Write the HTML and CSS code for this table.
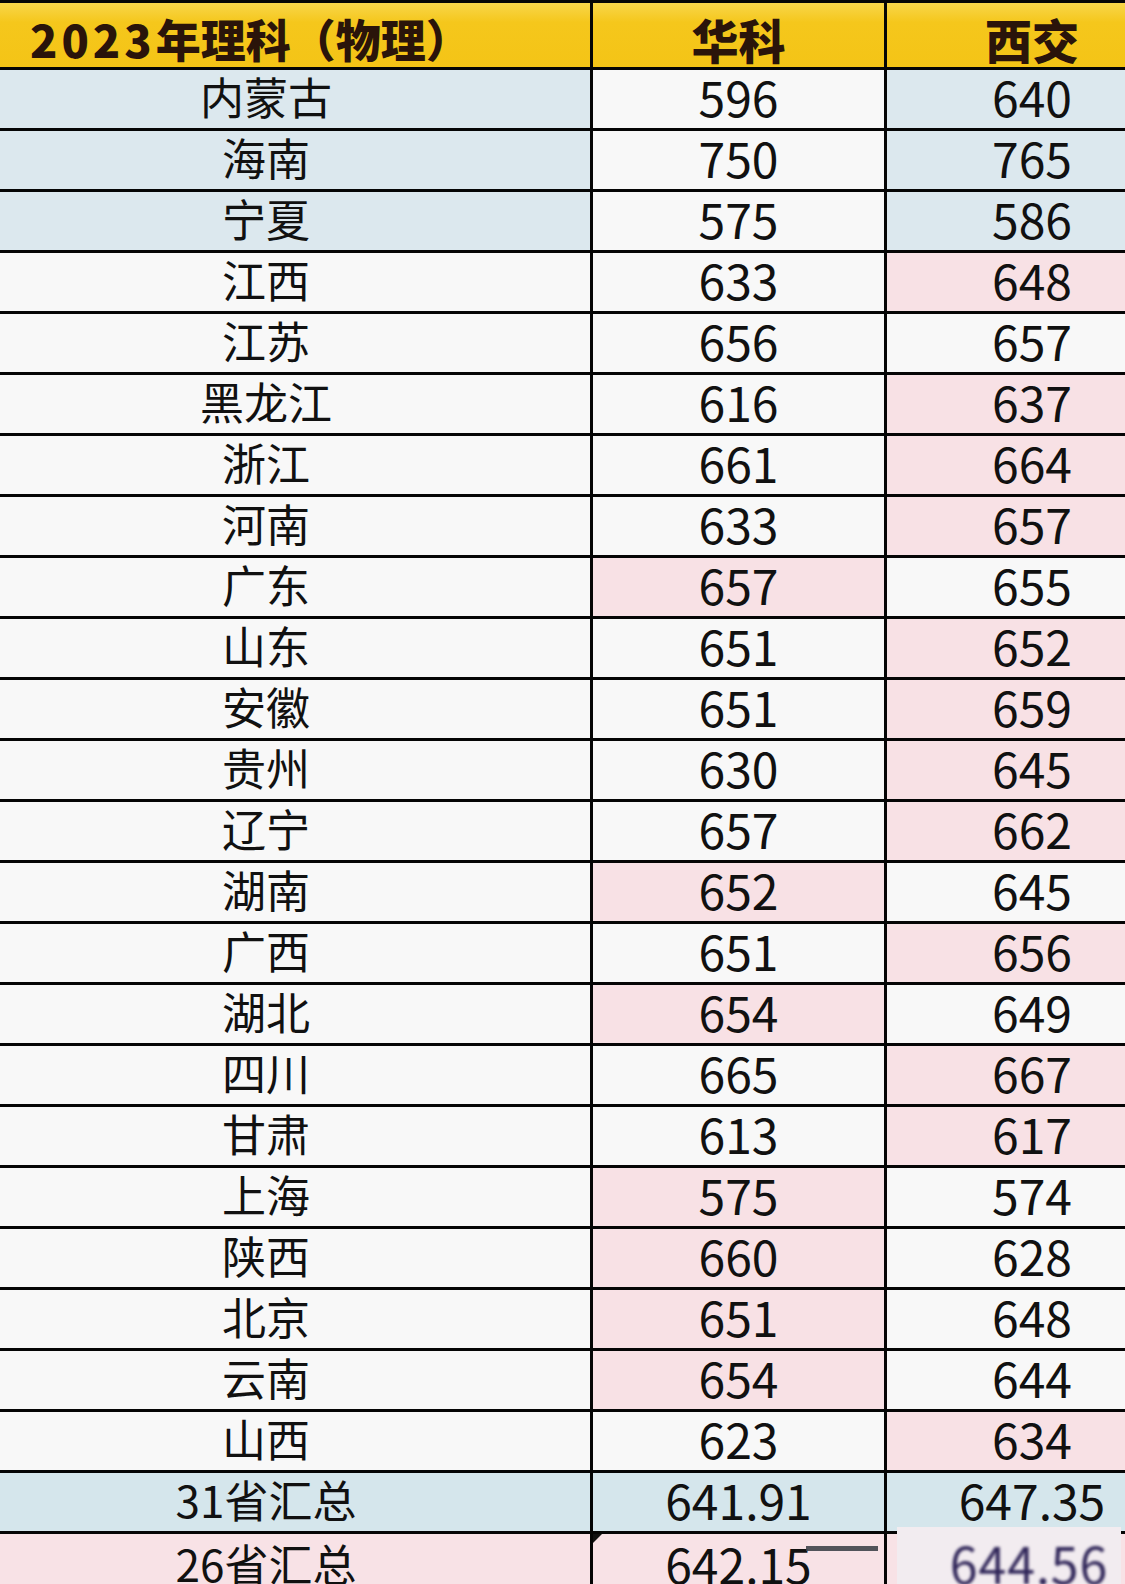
FILE: index.html
```html
<!DOCTYPE html>
<html lang="zh-CN">
<head>
<meta charset="utf-8">
<title>2023年理科（物理）</title>
<link rel="stylesheet" href="styles.css">
</head>
<body>
<div class="sheet">
  <div class="grid">
    <div class="cell hd c1"><span class="yr">2023</span>年理科（物理）</div>
    <div class="cell hd c2">华科</div>
    <div class="cell hd c3">西交</div>

    <div class="cell c1 blue">内蒙古</div><div class="cell c2">596</div><div class="cell c3 blue">640</div>
    <div class="cell c1 blue">海南</div><div class="cell c2">750</div><div class="cell c3 blue">765</div>
    <div class="cell c1 blue">宁夏</div><div class="cell c2">575</div><div class="cell c3 blue">586</div>
    <div class="cell c1">江西</div><div class="cell c2">633</div><div class="cell c3 pink">648</div>
    <div class="cell c1">江苏</div><div class="cell c2">656</div><div class="cell c3">657</div>
    <div class="cell c1">黑龙江</div><div class="cell c2">616</div><div class="cell c3 pink">637</div>
    <div class="cell c1">浙江</div><div class="cell c2">661</div><div class="cell c3 pink">664</div>
    <div class="cell c1">河南</div><div class="cell c2">633</div><div class="cell c3 pink">657</div>
    <div class="cell c1">广东</div><div class="cell c2 pink">657</div><div class="cell c3">655</div>
    <div class="cell c1">山东</div><div class="cell c2">651</div><div class="cell c3 pink">652</div>
    <div class="cell c1">安徽</div><div class="cell c2">651</div><div class="cell c3 pink">659</div>
    <div class="cell c1">贵州</div><div class="cell c2">630</div><div class="cell c3 pink">645</div>
    <div class="cell c1">辽宁</div><div class="cell c2">657</div><div class="cell c3 pink">662</div>
    <div class="cell c1">湖南</div><div class="cell c2 pink">652</div><div class="cell c3">645</div>
    <div class="cell c1">广西</div><div class="cell c2">651</div><div class="cell c3 pink">656</div>
    <div class="cell c1">湖北</div><div class="cell c2 pink">654</div><div class="cell c3">649</div>
    <div class="cell c1">四川</div><div class="cell c2">665</div><div class="cell c3 pink">667</div>
    <div class="cell c1">甘肃</div><div class="cell c2">613</div><div class="cell c3 pink">617</div>
    <div class="cell c1">上海</div><div class="cell c2 pink">575</div><div class="cell c3">574</div>
    <div class="cell c1">陕西</div><div class="cell c2 pink">660</div><div class="cell c3">628</div>
    <div class="cell c1">北京</div><div class="cell c2 pink">651</div><div class="cell c3">648</div>
    <div class="cell c1">云南</div><div class="cell c2 pink">654</div><div class="cell c3">644</div>
    <div class="cell c1">山西</div><div class="cell c2">623</div><div class="cell c3 pink">634</div>
    <div class="cell c1 blue2">31省汇总</div><div class="cell c2 blue2">641.91</div><div class="cell c3 blue2">647.35</div>
    <div class="cell c1 pink2 last">26省汇总</div><div class="cell c2 pink2 flag last">642.15</div><div class="cell c3 pink2 last">644.56</div>
  </div>
  <div class="mark-dash"></div>
  <div class="mark-box"><span class="mark-text">644.56</span></div>
</div>
</body>
</html>
```

FILE: styles.css
```css
html, body {
  margin: 0;
  padding: 0;
  background: #000;
}

body {
  width: 1125px;
  height: 1584px;
  overflow: hidden;
  font-family: "Noto Sans CJK SC", "Noto Sans", sans-serif;
  color: #111;
}

.sheet {
  position: relative;
  width: 1125px;
  height: 1584px;
  overflow: hidden;
}

.grid {
  display: grid;
  grid-template-columns: 590px 291px 238px;
  grid-template-rows: 64px;
  grid-auto-rows: 58px;
  column-gap: 3px;
  row-gap: 3px;
  padding-top: 3px;
  background: #050505;
}

.cell {
  display: flex;
  align-items: center;
  justify-content: center;
  background: #f8f8f8;
  font-size: 48px;
  line-height: 50px;
  padding-bottom: 6px;
  box-sizing: border-box;
  white-space: nowrap;
}

.c1 {
  font-size: 44px;
  padding-right: 58px;
}

.c3 {
  padding-left: 52px;
}

.hd {
  background: linear-gradient(#f8d64a 0%, #f5c71c 30%, #f4c416 100%);
  font-weight: 900;
  color: #2a140a;
  padding-top: 8px;
  padding-bottom: 0;
  font-size: 47px;
  line-height: 52px;
}

.hd.c1 {
  justify-content: flex-start;
  padding-left: 30px;
  padding-right: 0;
  font-size: 45px;
}

.yr {
  letter-spacing: 4px;
}

.last {
  align-items: flex-start;
  padding-top: 4px;
  padding-bottom: 0;
}

.blue {
  background: #dce8ee;
}

.blue2 {
  background: #d5e6ec;
}

.pink {
  background: #f8e1e5;
}

.pink2 {
  background: #f8e2e6;
}

.flag {
  position: relative;
}

.flag::before {
  content: "";
  position: absolute;
  left: 0;
  top: 0;
  border-top: 9px solid #111;
  border-right: 9px solid transparent;
}

.mark-dash {
  position: absolute;
  left: 806px;
  top: 1546px;
  width: 72px;
  height: 5px;
  background: #3f444a;
  opacity: 0.9;
}

.mark-box {
  position: absolute;
  left: 897px;
  top: 1527px;
  width: 224px;
  height: 60px;
  background: #f2ecf0;
  display: flex;
  justify-content: center;
  padding-left: 40px;
  box-sizing: border-box;
}

.mark-text {
  font-size: 50px;
  line-height: 50px;
  padding-top: 10px;
  color: #2f2558;
  filter: blur(1.4px);
  letter-spacing: 1px;
}
```
